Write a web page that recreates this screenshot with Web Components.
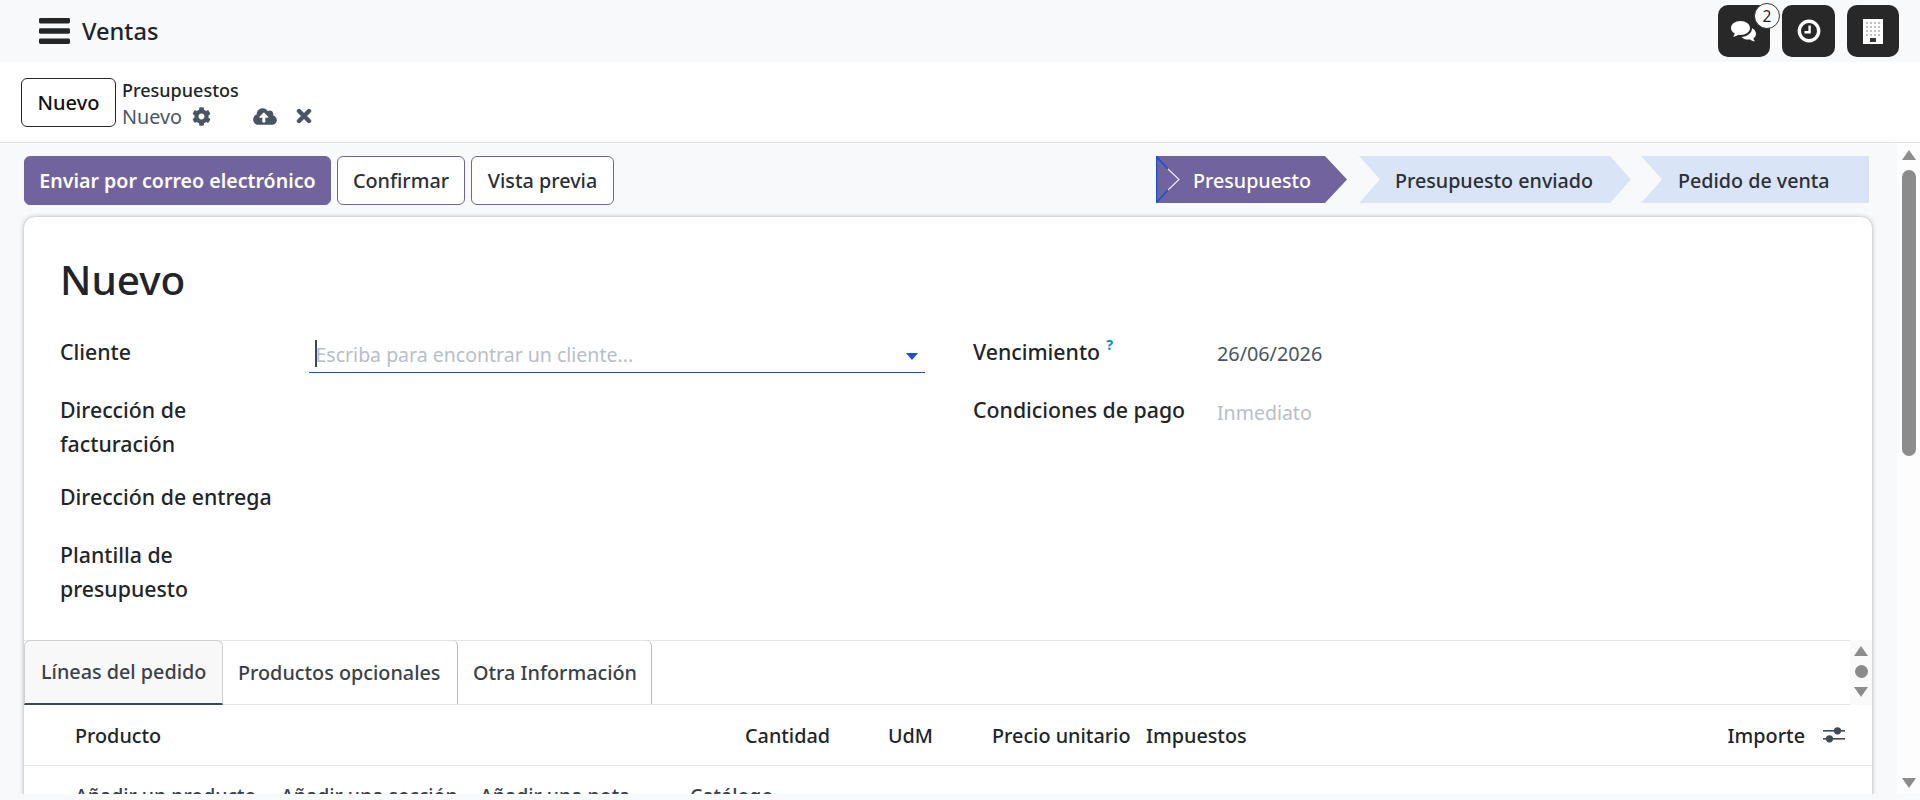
<!DOCTYPE html>
<html lang="es">
<head>
<meta charset="utf-8">
<title>Ventas</title>
<style>
  html, body { margin: 0; height: 800px; overflow: hidden; background: #f8f9fb; }
  body { font-family: "Noto Sans", "Open Sans", sans-serif; color: #212529; }
  app-shell { height: 800px; }
</style>
</head>
<body>
<app-shell>
  <top-navbar slot="nav" title-text="Ventas"></top-navbar>
  <control-panel slot="panel"></control-panel>
  <form-view slot="form"></form-view>
  <page-scrollbar slot="bar"></page-scrollbar>
</app-shell>

<script>
const ICONS = {
  gear: `<svg viewBox="0 0 512 512" width="19" height="19"><path fill="currentColor" d="M487.4 315.7l-42.6-24.6c4.3-23.2 4.3-47 0-70.2l42.6-24.6c4.9-2.8 7.1-8.6 5.5-14-11.1-35.6-30-67.8-54.7-94.6-3.8-4.1-10-5.1-14.8-2.3L380.8 110c-17.9-15.4-38.5-27.3-60.8-35.1V25.8c0-5.6-3.9-10.5-9.4-11.7-36.7-8.2-74.3-7.8-109.2 0-5.5 1.2-9.4 6.1-9.4 11.7V75c-22.2 7.9-42.8 19.8-60.8 35.1L88.7 85.5c-4.9-2.8-11-1.9-14.8 2.3-24.7 26.7-43.6 58.9-54.7 94.6-1.7 5.4.6 11.2 5.5 14L67.3 221c-4.3 23.2-4.3 47 0 70.2l-42.6 24.6c-4.9 2.8-7.1 8.6-5.5 14 11.1 35.6 30 67.8 54.7 94.6 3.8 4.1 10 5.1 14.8 2.3l42.6-24.6c17.9 15.4 38.5 27.3 60.8 35.1v49.2c0 5.6 3.9 10.5 9.4 11.7 36.7 8.2 74.3 7.8 109.2 0 5.5-1.2 9.4-6.1 9.4-11.7v-49.2c22.2-7.9 42.8-19.8 60.8-35.1l42.6 24.6c4.9 2.8 11 1.9 14.8-2.3 24.7-26.7 43.6-58.9 54.7-94.6 1.5-5.5-.7-11.3-5.6-14.1zM256 336c-44.1 0-80-35.9-80-80s35.9-80 80-80 80 35.9 80 80-35.9 80-80 80z"/></svg>`,
  cloud: `<svg viewBox="0 0 640 512" width="24" height="19"><path fill="currentColor" d="M537.6 226.6c4.1-10.7 6.4-22.4 6.4-34.6 0-53-43-96-96-96-19.7 0-38.1 6-53.3 16.2C367 64.2 315.3 32 256 32c-88.4 0-160 71.6-160 160 0 2.7.1 5.4.2 8.1C40.2 219.8 0 273.2 0 336c0 79.5 64.5 144 144 144h368c70.7 0 128-57.3 128-128 0-61.9-44-113.6-102.4-125.4zM393.4 288H328v112c0 8.8-7.2 16-16 16h-48c-8.8 0-16-7.2-16-16V288h-65.4c-14.3 0-21.4-17.2-11.3-27.3l105.4-105.4c6.2-6.2 16.4-6.2 22.6 0l105.4 105.4c10.1 10.1 2.9 27.3-11.3 27.3z"/></svg>`,
  times: `<svg viewBox="0 0 16 16" width="16" height="16"><path d="M3 3l10 10M13 3L3 13" stroke="currentColor" stroke-width="4.400" stroke-linecap="round" fill="none"/></svg>`,
  bars: `<svg viewBox="0 0 32 26" width="32" height="26"><g fill="currentColor"><rect x="0" y="0" width="31" height="5.5" rx="1.4"/><rect x="0" y="10.2" width="31" height="5.5" rx="1.4"/><rect x="0" y="20.5" width="31" height="5.5" rx="1.4"/></g></svg>`,
  comments: `<svg viewBox="0 0 26 21" width="26" height="21"><g fill="#fff"><path d="M9.5 0C4.3 0 0 3.1 0 7c0 2.3 1.5 4.3 3.8 5.600-.3 1.200-.9 2.200-1.800 3.100 2 0 3.900-.8 5.300-1.900.7.100 1.400.200 2.200.200 5.200 0 9.500-3.100 9.500-7S14.700 0 9.500 0z"/><path d="M21 7.300c.1 4.700-4.600 8.500-10.500 8.700 1.500 1.600 4 2.600 6.800 2.600.6 0 1.200 0 1.700-.1 1.300 1 3.100 1.800 5 1.800-.9-.9-1.400-1.800-1.600-2.800 1.600-1.100 2.600-2.700 2.600-4.400 0-2.600-1.500-4.700-3.900-5.800z"/></g></svg>`,
  clock: `<svg viewBox="0 0 24 24" width="24" height="24"><circle cx="12" cy="12" r="9.700" fill="none" stroke="#fff" stroke-width="3.400"/><path d="M12.600 6.500v6.800H7.500" fill="none" stroke="#fff" stroke-width="2.400"/></svg>`,
  building: `<svg viewBox="0 0 20 25" width="20" height="25"><rect width="20" height="25" fill="#fff"/><g fill="#555"><circle cx="4" cy="4" r=".7"/><circle cx="8" cy="4" r=".7"/><circle cx="12" cy="4" r=".7"/><circle cx="16" cy="4" r=".7"/><circle cx="4" cy="8" r=".7"/><circle cx="8" cy="8" r=".7"/><circle cx="12" cy="8" r=".7"/><circle cx="16" cy="8" r=".7"/><circle cx="4" cy="12" r=".7"/><circle cx="8" cy="12" r=".7"/><circle cx="12" cy="12" r=".7"/><circle cx="16" cy="12" r=".7"/><circle cx="4" cy="16" r=".7"/><circle cx="8" cy="16" r=".7"/><circle cx="12" cy="16" r=".7"/><circle cx="16" cy="16" r=".7"/></g><rect x="7" y="19" width="6" height="4" fill="#333"/></svg>`,
  sliders: `<svg viewBox="0 0 22 20" width="22" height="20"><g fill="#3f4a56"><rect x="0" y="5" width="22" height="1.600"/><rect x="0" y="13" width="22" height="1.600"/><circle cx="14.500" cy="5.800" r="3.600"/><circle cx="6.500" cy="13.800" r="3.600"/></g></svg>`
};

class AppShell extends HTMLElement {
  connectedCallback() {
    this.attachShadow({ mode: 'open' });
    this.shadowRoot.innerHTML = `
      <style>
        :host { display: flex; flex-direction: column; }
        .body { display: flex; height: 651px; overflow: hidden; }
        .content { flex: 1; min-width: 0; }
      </style>
      <slot name="nav"></slot>
      <slot name="panel"></slot>
      <div class="body">
        <div class="content"><slot name="form"></slot></div>
        <slot name="bar"></slot>
      </div>
    `;
  }
}

class TopNavbar extends HTMLElement {
  connectedCallback() {
    this.attachShadow({ mode: 'open' });
    this.shadowRoot.innerHTML = `
      <style>
        :host { display: flex; align-items: center; height: 62px; background: #f8f9fb; padding: 0 21px 0 39px; box-sizing: border-box; }
        .burger { color: #262626; display: flex; margin-right: 11px; }
        .title { font-size: 23.600px; font-weight: 500; color: #212529; }
        .right { margin-left: auto; display: flex; gap: 12px; }
        .sys { position: relative; width: 52px; height: 52px; background: #282828; border-radius: 10px; display: flex; align-items: center; justify-content: center; }
        .mid { width: 53px; }
        .badge { position: absolute; left: 36px; top: -2px; width: 26px; height: 26px; box-sizing: border-box; border: 1px solid #333; border-radius: 50%; background: #fff; color: #212529; font-size: 15.500px; display: flex; align-items: center; justify-content: center; }
      </style>
      <span class="burger">${ICONS.bars}</span>
      <span class="title">${this.getAttribute('title-text')}</span>
      <div class="right">
        <div class="sys">${ICONS.comments}<span class="badge">2</span></div>
        <div class="sys mid">${ICONS.clock}</div>
        <div class="sys">${ICONS.building}</div>
      </div>
    `;
  }
}

class ControlPanel extends HTMLElement {
  connectedCallback() {
    this.attachShadow({ mode: 'open' });
    this.shadowRoot.innerHTML = `
      <style>
        :host { display: flex; height: 81px; box-sizing: border-box; background: #fff; border-bottom: 1.500px solid #dee2e6; padding: 16px 0 0 21px; }
        .new { width: 95px; height: 49px; box-sizing: border-box; border: 1px solid #212529; border-radius: 6px; display: flex; align-items: center; justify-content: center; font-size: 20px; font-weight: 500; color: #111; }
        .crumbs { margin-left: 6px; }
        .parent { font-size: 18px; font-weight: 500; line-height: 24px; margin-top: 0; color: #212529; }
        .cur { display: flex; align-items: center; height: 28px; font-size: 19.800px; color: #4a5563; }
        .cur span { display: flex; }
        .g { margin-left: 10px; color: #4a5563; }
        .c { margin-left: 42px; color: #4a5563; }
        .x { margin-left: 19px; color: #4a5563; }
      </style>
      <div class="new">Nuevo</div>
      <div class="crumbs">
        <div class="parent">Presupuestos</div>
        <div class="cur">Nuevo<span class="g">${ICONS.gear}</span><span class="c">${ICONS.cloud}</span><span class="x">${ICONS.times}</span></div>
      </div>
    `;
  }
}

class StatusBar extends HTMLElement {
  connectedCallback() {
    this.attachShadow({ mode: 'open' });
    this.shadowRoot.innerHTML = `
      <style>
        :host { display: flex; height: 47px; margin-left: auto; font-size: 19.700px; font-weight: 500; }
        .st { position: relative; display: flex; align-items: center; box-sizing: border-box; background: #d9e4f6; color: #2b2f36; padding-top: 2px; }
        .a { width: 191px; padding-left: 37px; background: #71639e; color: #fff; clip-path: polygon(0 0, calc(100% - 22px) 0, 100% 50%, calc(100% - 22px) 100%, 0 100%); }
        .b { width: 272px; margin-left: 12px; padding-left: 36px; clip-path: polygon(0 0, calc(100% - 21px) 0, 100% 50%, calc(100% - 21px) 100%, 0 100%, 21px 50%); }
        .c { width: 228px; margin-left: 10px; padding-left: 37px; clip-path: polygon(0 0, 100% 0, 100% 100%, 0 100%, 21px 50%); }
        svg { position: absolute; left: 0; top: 0; }
      </style>
      <div class="st a"><svg width="26" height="47" viewBox="0 0 26 47"><path d="M.5 .5L12 13" stroke="#1650d8" stroke-width="1.500" fill="none"/><path d="M12 13L23 23.500L12 34" stroke="#e8e8f4" stroke-width="1.200" fill="none"/><path d="M.5 46.500L12 34M.5 .5V46.500" stroke="#1650d8" stroke-width="1.500" fill="none"/></svg>Presupuesto</div>
      <div class="st b">Presupuesto enviado</div>
      <div class="st c">Pedido de venta</div>
    `;
  }
}

class ActionBar extends HTMLElement {
  connectedCallback() {
    this.attachShadow({ mode: 'open' });
    this.shadowRoot.innerHTML = `
      <style>
        :host { display: flex; height: 49px; gap: 6px; align-items: flex-start; padding-right: 4px; margin-left: 1px; }
        .btn { height: 49px; box-sizing: border-box; border: 1px solid #71639e; border-radius: 6px; background: #fff; display: flex; align-items: center; justify-content: center; font-size: 19.800px; font-weight: 500; color: #2b2f36; }
        .primary { width: 307px; background: #71639e; color: #fff; font-weight: 600; font-size: 19.600px; }
        .w1 { width: 128px; }
        .w2 { width: 143px; }
      </style>
      <div class="btn primary">Enviar por correo electrónico</div>
      <div class="btn w1">Confirmar</div>
      <div class="btn w2">Vista previa</div>
      <status-bar></status-bar>
    `;
  }
}

class FieldRow extends HTMLElement {
  connectedCallback() {
    this.attachShadow({ mode: 'open' });
    this.shadowRoot.innerHTML = `
      <style>
        :host { display: grid; grid-template-columns: var(--label-w, 249px) 1fr; font-size: 19.800px; line-height: 34px; }
        .label { font-weight: 500; color: #212529; font-size: 21.300px; }
      </style>
      <div class="label"><slot name="label"></slot></div>
      <div><slot></slot></div>
    `;
  }
}

class ClientInput extends HTMLElement {
  connectedCallback() {
    this.attachShadow({ mode: 'open' });
    this.shadowRoot.innerHTML = `
      <style>
        :host { display: flex; align-items: center; height: 38px; box-sizing: border-box; border-bottom: 1.500px solid #1a50d0; padding-left: 6px; position: relative; font-size: 19.500px; }
        .caret { width: 1.500px; height: 27px; background: #3c4650; }
        .ph { color: #b7bec7; margin-left: -1px; position: relative; top: 1.500px; }
        .tri { margin-left: auto; margin-right: 7px; width: 0; height: 0; border-left: 6px solid transparent; border-right: 6px solid transparent; border-top: 7px solid #1a50d0; position: relative; top: 3px; }
      </style>
      <span class="caret"></span><span class="ph">Escriba para encontrar un cliente...</span><span class="tri"></span>
    `;
  }
}

class OrderTabs extends HTMLElement {
  connectedCallback() {
    this.attachShadow({ mode: 'open' });
    this.shadowRoot.innerHTML = `
      <style>
        :host { display: flex; height: 65px; font-size: 19.800px; font-weight: 500; color: #3b4149; }
        .tabs { flex: 1; display: flex; border-top: 1.500px solid #e5e5ec; border-bottom: 1.500px solid #e5e5ec; box-sizing: border-box; }
        .tab { display: flex; align-items: center; box-sizing: border-box; border-right: 1px solid #b9b9b9; border-top-right-radius: 6px; margin-top: -1px; }
        .on { width: 199px; padding-left: 16px; background: #f8f8f8; border: 1px solid #cfcfcf; border-bottom: 2px solid #33495f; border-radius: 6px 6px 0 0; margin: -1px 0 -1px 0; padding-bottom: 2px; }
        .t2 { width: 235px; padding-left: 15px; }
        .t3 { width: 194px; padding-left: 15px; }
        .scroll { width: 22px; background: #fafafa; display: flex; flex-direction: column; align-items: center; color: #8c8c8c; padding-top: 6px; box-sizing: border-box; }
        .up { width: 0; border-left: 7.500px solid transparent; border-right: 7.500px solid transparent; border-bottom: 10px solid #8c8c8c; }
        .dot { width: 13px; height: 13px; border-radius: 50%; background: #8c8c8c; margin: 9px 0; }
        .down { width: 0; border-left: 7.500px solid transparent; border-right: 7.500px solid transparent; border-top: 10px solid #8c8c8c; }
      </style>
      <div class="tabs">
        <div class="tab on">Líneas del pedido</div>
        <div class="tab t2">Productos opcionales</div>
        <div class="tab t3">Otra Información</div>
      </div>
      <div class="scroll"><span class="up"></span><span class="dot"></span><span class="down"></span></div>
    `;
  }
}

class OrderTable extends HTMLElement {
  connectedCallback() {
    this.attachShadow({ mode: 'open' });
    this.shadowRoot.innerHTML = `
      <style>
        :host { display: block; font-size: 19.800px; }
        .head { display: grid; grid-template-columns: 670px 143px 104px 154px 1fr auto auto; align-items: center; height: 61px; box-sizing: border-box; padding: 0 27px 0 51px; border-bottom: 1.500px solid #e5e5ec; font-weight: 500; color: #212529; }
        .ico { display: flex; margin-left: 18px; }
        .add { display: flex; padding: 17px 0 0 51px; line-height: 26px; color: #3b4149; font-weight: 500; font-size: 19.500px; }
        .add span:nth-child(1) { width: 206px; }
        .add span:nth-child(2) { width: 199px; }
        .add span:nth-child(3) { width: 210px; }
      </style>
      <div class="head">
        <span>Producto</span><span>Cantidad</span><span>UdM</span><span>Precio unitario</span><span>Impuestos</span><span>Importe</span><span class="ico">${ICONS.sliders}</span>
      </div>
      <div class="add"><span>Añadir un producto</span><span>Añadir una sección</span><span>Añadir una nota</span><span>Catálogo</span></div>
    `;
  }
}

class FormView extends HTMLElement {
  connectedCallback() {
    this.attachShadow({ mode: 'open' });
    this.shadowRoot.innerHTML = `
      <style>
        :host { display: block; padding: 13px 24px 0 23px; font-size: 19.800px; }
        .sheet { margin-top: 11px; height: 700px; box-sizing: border-box; background: #fff; border: 1px solid #d8d8d8; border-radius: 12px 12px 0 0; box-shadow: 0 0 4px rgba(0,0,0,.18); }
        h1 { margin: 0; padding: 35px 0 0 36px; font-size: 40.500px; font-weight: 500; line-height: 56px; color: #212529; }
        .groups { display: grid; grid-template-columns: 865px 1fr; column-gap: 48px; padding: 27px 0 0 36px; height: 332px; box-sizing: border-box; }
        .gap1 { margin-bottom: 19.500px; }
        .gap2 { margin-bottom: 19px; }
        .gap3 { margin-bottom: 24px; }
        .gap4 { margin-bottom: 22px; }
        .right field-row { --label-w: 244px; }
        .val { color: #4a5563; display: block; padding-top: 2px; }
        .muted { color: #b7bec7; padding-top: 3px; font-size: 19.500px; }
        sup { color: #118fb8; font-size: 14.500px; font-weight: 700; line-height: 0; margin-left: 6px; position: relative; top: -2px; }
      </style>
      <action-bar></action-bar>
      <div class="sheet">
        <h1>Nuevo</h1>
        <div class="groups">
          <div>
            <field-row class="gap1"><span slot="label">Cliente</span><client-input></client-input></field-row>
            <field-row class="gap2"><span slot="label">Dirección de<br>facturación</span></field-row>
            <field-row class="gap3"><span slot="label">Dirección de entrega</span></field-row>
            <field-row><span slot="label">Plantilla de<br>presupuesto</span></field-row>
          </div>
          <div class="right">
            <field-row class="gap4"><span slot="label">Vencimiento<sup>?</sup></span><span class="val">26/06/2026</span></field-row>
            <field-row><span slot="label">Condiciones de pago</span><span class="val muted">Inmediato</span></field-row>
          </div>
        </div>
        <order-tabs></order-tabs>
        <order-table></order-table>
      </div>
    `;
  }
}

class PageScrollbar extends HTMLElement {
  connectedCallback() {
    this.attachShadow({ mode: 'open' });
    this.shadowRoot.innerHTML = `
      <style>
        :host { display: flex; flex-direction: column; align-items: center; width: 23px; background: #fdfdfd; box-sizing: border-box; padding-top: 7px; }
        .up { width: 0; border-left: 7.500px solid transparent; border-right: 7.500px solid transparent; border-bottom: 10px solid #8c8c8c; }
        .thumb { width: 14px; height: 286px; border-radius: 7px; background: #8c8c8c; margin-top: 10px; }
        .down { width: 0; border-left: 7.500px solid transparent; border-right: 7.500px solid transparent; border-top: 10px solid #8c8c8c; margin-top: auto; margin-bottom: 6px; }
      </style>
      <span class="up"></span><span class="thumb"></span><span class="down"></span>
    `;
  }
}

customElements.define('app-shell', AppShell);
customElements.define('top-navbar', TopNavbar);
customElements.define('control-panel', ControlPanel);
customElements.define('status-bar', StatusBar);
customElements.define('action-bar', ActionBar);
customElements.define('field-row', FieldRow);
customElements.define('client-input', ClientInput);
customElements.define('order-tabs', OrderTabs);
customElements.define('order-table', OrderTable);
customElements.define('form-view', FormView);
customElements.define('page-scrollbar', PageScrollbar);
</script>
</body>
</html>
